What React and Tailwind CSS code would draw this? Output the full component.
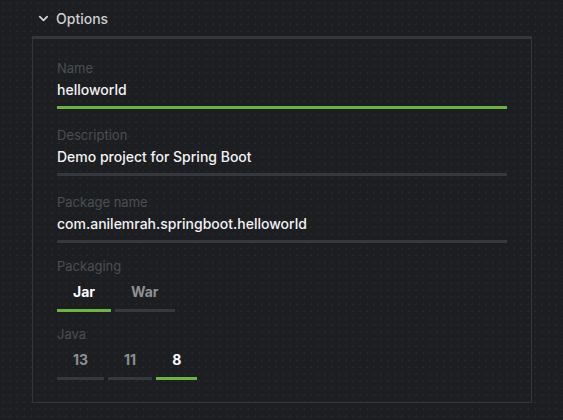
import { useState } from "react";

export default function App() {
  const [packaging, setPackaging] = useState("Jar");
  const [java, setJava] = useState("8");

  return (
    <div
      className="w-[563px] h-[420px] overflow-hidden bg-[#1c1e22] text-[#f0f0f0] bg-[radial-gradient(#25282c_1px,transparent_1px)] bg-[length:7px_7px]"
      style={{ fontFamily: "Inter, 'Open Sans', sans-serif" }}
    >
      {/* Section header */}
      <div className="flex items-center h-[36px] pl-[38px]">
        <svg width="11" height="11" viewBox="0 0 12 12" className="mr-[7px] mt-px">
          <path d="M2 4l4 4 4-4" fill="none" stroke="#d0d0d0" strokeWidth="2" strokeLinecap="round" strokeLinejoin="round" />
        </svg>
        <span className="text-[14px] text-[#cfcfcf] font-medium">Options</span>
      </div>

      {/* Panel */}
      <div className="ml-[32px] w-[500px] h-[367px] border border-t-[3px] border-[#33363a] pl-[24px] pt-[21px]">
        <Field label="Name" value="helloworld" active />
        <Field label="Description" value="Demo project for Spring Boot" />
        <Field label="Package name" value="com.anilemrah.springboot.helloworld" />

        <div className="-mt-[3px]">
          <Label>Packaging</Label>
          <div className="flex gap-[4px] mt-[7px]">
            {["Jar", "War"].map((p) => (
              <Choice key={p} label={p} active={packaging === p} onClick={() => setPackaging(p)} />
            ))}
          </div>
        </div>

        <div className="mt-[14px]">
          <Label>Java</Label>
          <div className="flex gap-[4px] mt-[7px]">
            {["13", "11", "8"].map((j) => (
              <Choice key={j} label={j} active={java === j} onClick={() => setJava(j)} />
            ))}
          </div>
        </div>
      </div>
    </div>
  );
}

function Label({ children }) {
  return <div className="text-[13px] leading-[16px] text-[#4b4e53]">{children}</div>;
}

function Field({ label, value, active }) {
  return (
    <div className="w-[450px] mb-[18px]">
      <Label>{label}</Label>
      <div className="mt-[3px] text-[14px] leading-[22px] font-medium text-[#f2f2f2] pb-[5px]">{value}</div>
      <div className={active ? "h-[3px] bg-[#6db33f]" : "h-[3px] bg-[#35383c]"} />
    </div>
  );
}

function Choice({ label, active, onClick }) {
  return (
    <button
      onClick={onClick}
      className={`px-4 pt-px pb-[7px] text-[14px] leading-[20px] font-bold border-b-[3px] ${
        active ? "border-[#6db33f] text-white" : "border-[#35383c] text-[#8e9094]"
      }`}
    >
      {label}
    </button>
  );
}
